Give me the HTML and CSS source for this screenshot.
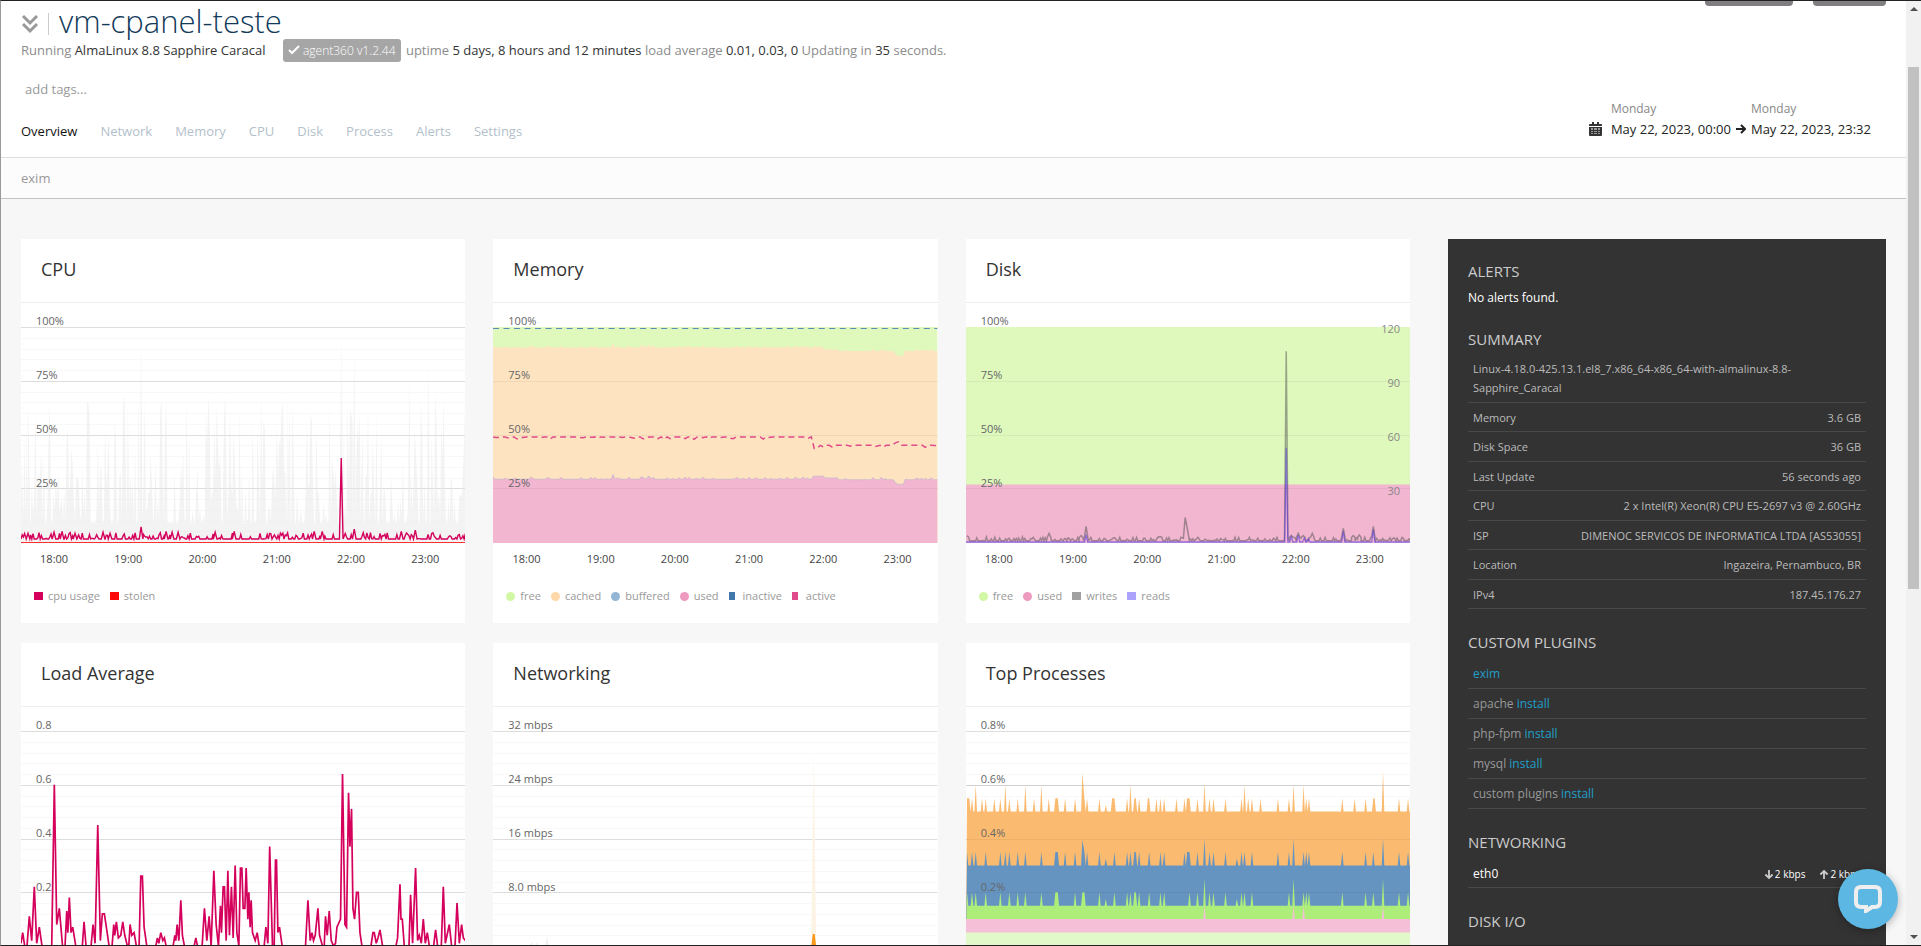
FILE: index.html
```
<!DOCTYPE html>
<html lang="en">

<head>
    <meta charset="utf-8">
    <meta name="viewport" content="width=device-width, initial-scale=1.0">
    <title>vm-cpanel-teste</title>
    <link rel="stylesheet" href="styles.css">
</head>

<body>
    <div class="window">
        <div class="page">
            <header class="top">
                <div class="actions">
                    <button class="action wide" aria-label="Share"></button>
                    <button class="action" aria-label="Menu"></button>
                </div>
                <div class="title">
                    <svg class="chevrons" viewBox="0 0 18 20"><path d="M2 2l7 7 7-7M2 10l7 7 7-7" /></svg>
                    <h1>vm-cpanel-teste</h1>
                </div>
                <p class="status">Running <b>AlmaLinux 8.8 Sapphire Caracal</b>
                    <span class="agent"><svg viewBox="0 0 12 10"><path d="M1 5l3 3 7-7" /></svg> agent360 v1.2.44</span>
                    uptime <b>5 days, 8 hours and 12 minutes</b> load average <b>0.01, 0.03, 0</b> Updating in <b>35</b> seconds.</p>
                <input class="tags" type="text" placeholder="add tags..." aria-label="Tags">
                <div class="bar">
                    <nav class="tabs">
                        <a class="chosen" href="#">Overview</a>
                        <a href="#">Network</a>
                        <a href="#">Memory</a>
                        <a href="#">CPU</a>
                        <a href="#">Disk</a>
                        <a href="#">Process</a>
                        <a href="#">Alerts</a>
                        <a href="#">Settings</a>
                    </nav>
                    <div class="dates">
                        <svg class="calendar" viewBox="0 0 13 14">
                            <path d="M1 2h11q1 0 1 1v1H0V3q0-1 1-1zM0 5h13v8q0 1-1 1H1q-1 0-1-1zM3 0h2v3H3zM8 0h2v3H8z" />
                            <path class="holes" d="M2 6h2v2H2zM5 6h3v2H5zM9 6h2v2H9zM2 9h2v1H2zM5 9h3v1H5zM9 9h2v1H9zM2 11h2v1H2zM5 11h3v1H5zM9 11h2v1H9z" />
                        </svg>
                        <div class="date"><span>Monday</span>May 22, 2023, 00:00</div>
                        <svg class="arrow" viewBox="0 0 10 10"><path d="M0 5h9M5 1l4 4-4 4" /></svg>
                        <div class="date"><span>Monday</span>May 22, 2023, 23:32</div>
                    </div>
                </div>
            </header>
            <nav class="subnav"><a href="#">exim</a></nav>

            <main>
                <section class="cards">
                    <article class="card">
                        <h2>CPU</h2>
                        <div class="chart" id="cpu" data-labels="100%,75%,50%,25%" data-times="18:00,19:00,20:00,21:00,22:00,23:00"></div>
                        <ul class="legend">
                            <li><i class="cpu"></i>cpu usage</li>
                            <li><i class="stolen"></i>stolen</li>
                        </ul>
                    </article>
                    <article class="card">
                        <h2>Memory</h2>
                        <div class="chart" id="memory" data-labels="100%,75%,50%,25%" data-times="18:00,19:00,20:00,21:00,22:00,23:00"></div>
                        <ul class="legend">
                            <li><i class="dot free"></i>free</li>
                            <li><i class="dot cached"></i>cached</li>
                            <li><i class="dot buffered"></i>buffered</li>
                            <li><i class="dot used"></i>used</li>
                            <li><i class="slim inactive"></i>inactive</li>
                            <li><i class="slim active"></i>active</li>
                        </ul>
                    </article>
                    <article class="card">
                        <h2>Disk</h2>
                        <div class="chart" id="disk" data-labels="100%,75%,50%,25%" data-right="120,90,60,30" data-times="18:00,19:00,20:00,21:00,22:00,23:00"></div>
                        <ul class="legend">
                            <li><i class="dot free"></i>free</li>
                            <li><i class="dot used"></i>used</li>
                            <li><i class="writes"></i>writes</li>
                            <li><i class="reads"></i>reads</li>
                        </ul>
                    </article>
                    <article class="card">
                        <h2>Load Average</h2>
                        <div class="chart" id="load" data-labels="0.8,0.6,0.4,0.2"></div>
                    </article>
                    <article class="card">
                        <h2>Networking</h2>
                        <div class="chart" id="network" data-labels="32 mbps,24 mbps,16 mbps,8.0 mbps"></div>
                    </article>
                    <article class="card">
                        <h2>Top Processes</h2>
                        <div class="chart" id="processes" data-labels="0.8%,0.6%,0.4%,0.2%"></div>
                    </article>
                </section>

                <aside>
                    <section>
                        <h3>Alerts</h3>
                        <p>No alerts found.</p>
                    </section>
                    <section>
                        <h3>Summary</h3>
                        <table class="summary">
                            <tr><td colspan="2">Linux-4.18.0-425.13.1.el8_7.x86_64-x86_64-with-almalinux-8.8-Sapphire_Caracal</td></tr>
                            <tr><th>Memory</th><td>3.6 GB</td></tr>
                            <tr><th>Disk Space</th><td>36 GB</td></tr>
                            <tr><th>Last Update</th><td>56 seconds ago</td></tr>
                            <tr><th>CPU</th><td>2 x Intel(R) Xeon(R) CPU E5-2697 v3 @ 2.60GHz</td></tr>
                            <tr><th>ISP</th><td>DIMENOC SERVICOS DE INFORMATICA LTDA [AS53055]</td></tr>
                            <tr><th>Location</th><td>Ingazeira, Pernambuco, BR</td></tr>
                            <tr><th>IPv4</th><td>187.45.176.27</td></tr>
                        </table>
                    </section>
                    <section>
                        <h3>Custom plugins</h3>
                        <ul class="plugins">
                            <li><a href="#">exim</a></li>
                            <li>apache <a href="#">install</a></li>
                            <li>php-fpm <a href="#">install</a></li>
                            <li>mysql <a href="#">install</a></li>
                            <li>custom plugins <a href="#">install</a></li>
                        </ul>
                    </section>
                    <section>
                        <h3>Networking</h3>
                        <div class="device">
                            <b>eth0</b>
                            <span><svg viewBox="0 0 8 10"><path d="M4 0v9M0 5l4 4 4-4" /></svg>2 kbps</span>
                            <span><svg viewBox="0 0 8 10"><path d="M4 10V1M0 5l4-4 4 4" /></svg>2 kbps</span>
                        </div>
                    </section>
                    <section>
                        <h3>Disk I/O</h3>
                    </section>
                </aside>
            </main>
        </div>

        <div class="scrollbar">
            <i class="up"></i>
            <div class="thumb"></div>
            <i class="down"></i>
        </div>
    </div>

    <button class="chat" aria-label="Chat">
        <svg viewBox="0 0 28 28"><path d="M7 2h14q5 0 5 5v10q0 5-5 5h-3l-6 4v-4H7q-5 0-5-5V7q0-5 5-5z" /></svg>
    </button>

    <script src="charts.js"></script>
</body>

</html>
```
FILE: styles.css
```
* {
    box-sizing: border-box;
}

body {
    margin: 0;
    background-color: #f7f7f7;
    font-family: "Open Sans", sans-serif;
    font-size: 13px;
    line-height: 20px;
    color: #333;
}

h1, h2, h3, p, ul {
    margin: 0;
    padding: 0;
    font-weight: 400;
}

ul {
    list-style: none;
}

a {
    text-decoration: none;
}

svg {
    fill: none;
}

.window {
    display: flex;
    height: 100vh;
    overflow: hidden;
    border-top: 1px solid #222;
    border-bottom: 1px solid #222;
    border-left: 1px solid #999;
}

.page {
    flex: 1;
    min-width: 0;
}

/* header */

.top {
    position: relative;
    padding: 0 20px 16px;
    background-color: #fff;
    border-bottom: 1px solid #ddd;
}

.actions {
    position: absolute;
    top: 0;
    right: 20px;
    display: flex;
    gap: 20px;
}

.action {
    width: 73px;
    height: 5px;
    padding: 0;
    border: none;
    border-radius: 0 0 4px 4px;
    background-color: #807e80;
}

.action.wide {
    width: 88px;
}

.title {
    display: flex;
    align-items: center;
    height: 38px;
    padding-top: 8px;
}

.chevrons {
    width: 18px;
    height: 20px;
    margin-right: 9px;
    stroke: #999;
    stroke-width: 3;
}

h1 {
    padding: 0 0 6px 10px;
    border-left: 1px solid #ccc;
    font-size: 31px;
    font-weight: 300;
    line-height: 16px;
    color: #123a5a;
}

.status {
    line-height: 23px;
    color: #8c8c8c;
}

.status b {
    font-weight: 400;
    color: #333;
}

.agent {
    display: inline-block;
    margin: 0 2px 0 14px;
    padding: 0 5px;
    border-radius: 3px;
    background-color: #a6a6a6;
    font-weight: 300;
    font-size: 12px;
    color: #fff;
}

.agent svg {
    width: 12px;
    height: 10px;
    stroke: #fff;
    stroke-width: 2;
}

.tags {
    display: block;
    height: 20px;
    margin-top: 17px;
    padding: 0 4px;
    border: none;
    font: inherit;
}

.tags::placeholder {
    color: #999;
}

.bar {
    display: flex;
    justify-content: space-between;
    align-items: flex-end;
}

.tabs {
    display: flex;
    gap: 23px;
}

.tabs a {
    color: #b3bfca;
}

.tabs .chosen {
    color: #111;
}

.dates {
    display: flex;
    align-items: flex-end;
    margin-right: 15px;
    padding-bottom: 2px;
    line-height: 20px;
    color: #222;
}

.date span {
    display: block;
    font-size: 12px;
    color: #888;
}

.calendar {
    width: 13px;
    height: 14px;
    margin: 0 9px 3px 0;
    fill: #333;
}

.calendar .holes {
    fill: #999;
}

.arrow {
    width: 10px;
    height: 10px;
    margin: 0 5px 5px;
    stroke: #222;
    stroke-width: 2;
}

.subnav {
    padding: 10px 20px;
    background-color: #fcfcfc;
    border-bottom: 1px solid #c4c4c4;
}

.subnav a {
    color: #999;
}

/* cards */

main {
    display: grid;
    grid-template-columns: minmax(0, 1fr) 438px;
    gap: 38px;
    padding: 40px 20px;
}

.cards {
    display: grid;
    grid-template-columns: repeat(3, minmax(0, 1fr));
    gap: 20px 28px;
}

.card {
    height: 384px;
    background-color: #fff;
}

h2 {
    height: 64px;
    padding: 0 20px;
    border-bottom: 1px solid #eee;
    font-size: 18px;
    line-height: 61px;
}

.chart {
    position: relative;
    font-size: 11px;
}

.chart svg {
    display: block;
    width: 100%;
    height: 240px;
}

.chart .y {
    position: absolute;
    top: 8px;
    left: 15px;
    display: grid;
    grid-auto-rows: 54px;
    color: #666;
}

.chart .y.right {
    top: 16px;
    left: auto;
    right: 10px;
    text-align: right;
    color: #888;
}

.chart .x {
    display: grid;
    grid-template-columns: repeat(6, 1fr);
    margin: 6px 3px 0 -4px;
    text-align: center;
    color: #444;
}

.major {
    stroke: #ddd;
}

.minor {
    stroke: #f8f8f8;
}

.over {
    stroke: #000;
    stroke-opacity: 0.05;
}

.legend {
    display: flex;
    gap: 10px;
    margin-top: 17px;
    padding: 0 13px;
    font-size: 11px;
    color: #999;
}

.legend li {
    display: flex;
    align-items: center;
}

.legend i {
    width: 9px;
    height: 8px;
    margin-right: 5px;
}

.legend .dot {
    height: 9px;
    border-radius: 50%;
}

.legend .slim {
    width: 6px;
    margin-right: 8px;
}

.legend .cpu { background-color: #d4005c; }
.legend .stolen { background-color: #ff0a0a; }
.legend .free { background-color: #d2f8a6; }
.legend .cached { background-color: #fed8a8; }
.legend .buffered { background-color: #93b5d6; }
.legend .used { background-color: #ef9bbf; }
.legend .inactive { background-color: #4178ac; }
.legend .active { background-color: #e04a8a; }
.legend .writes { background-color: #a0a0a0; }
.legend .reads { background-color: #aba3fb; }

/* sidebar */

aside {
    padding: 22px 20px;
    background-color: #333;
    color: #ccc;
    font-size: 12px;
}

aside section {
    margin-bottom: 23px;
}

aside p {
    margin: 7px 0 -2px;
    color: #fff;
}

h3 {
    margin-bottom: 5px;
    font-size: 15px;
    text-transform: uppercase;
}

.summary {
    width: 100%;
    border-spacing: 0;
    font-size: 11px;
    line-height: 19px;
    color: #bbb;
}

.summary th,
.summary td {
    height: 29px;
    padding: 0 5px;
    border-bottom: 1px solid #484848;
    font-weight: 400;
    text-align: left;
}

.summary th + td {
    text-align: right;
}

.summary tr:nth-child(odd) td {
    height: 30px;
}

.summary td[colspan] {
    padding: 5px;
}

.plugins li {
    height: 30px;
    padding: 5px 5px 0;
    border-bottom: 1px solid #484848;
    color: #999;
}

.plugins li:first-child {
    height: 32px;
    padding-top: 7px;
}

.plugins a {
    color: #1f9fc9;
}

.device {
    display: flex;
    gap: 15px;
    padding: 7px 5px 3px;
    border-bottom: 1px solid #484848;
    color: #fff;
}

.device b {
    flex: 1;
    font-weight: 400;
}

.device span {
    font-size: 10px;
}

.device svg {
    width: 8px;
    height: 9px;
    margin-right: 2px;
    stroke: #ccc;
    stroke-width: 2;
    overflow: visible;
    vertical-align: -1px;
}

/* scrollbar and chat */

.scrollbar {
    display: flex;
    flex-direction: column;
    align-items: center;
    width: 15px;
    padding: 6px 0;
    background-color: #f1f1f1;
}

.scrollbar .thumb {
    width: 11px;
    height: 56%;
    margin-top: 56px;
    margin-bottom: auto;
    background-color: #c1c1c1;
}

.up,
.down {
    border: 4px solid transparent;
}

.up {
    border-top: none;
    border-bottom-color: #505050;
}

.down {
    border-bottom: none;
    border-top-color: #505050;
}

.chat {
    position: fixed;
    right: 23px;
    bottom: 17px;
    width: 60px;
    height: 60px;
    padding: 15px 16px;
    border: none;
    border-radius: 50%;
    background-color: #5cb7e3;
    box-shadow: 0 2px 8px rgba(0, 0, 0, 0.3);
}

.chat svg {
    display: block;
    width: 28px;
    height: 28px;
    stroke: #eee;
    stroke-width: 4;
}
```
FILE: charts.js
```
// plot area is 444 x 240, value 0 sits on y 239 and the top grid line on y 24
const W = 444;
const BASE = 239;
const SPAN = 215;

let seed = 7;

function random() {
    seed = (seed * 16807) % 2147483647;
    return seed / 2147483647;
}

function toPoints(data, max) {
    return data.map(d => d[0].toFixed(1) + "," + (BASE - d[1] / max * SPAN).toFixed(1)).join(" ");
}

function line(data, max, attrs) {
    return `<polyline points="${toPoints(data, max)}" ${attrs}/>`;
}

function area(data, max, color) {
    return `<polygon points="0,${BASE + 1} ${toPoints(data, max)} ${W},${BASE + 1}" fill="${color}"/>`;
}

// low noise with now and then a small bump
function noise(low, bump, chance) {
    const data = [];
    for (let x = 0; x <= W; x += 1.2) {
        data.push([x, low + (random() < chance ? random() * bump : 0)]);
    }
    data.push([W, low]);
    return data;
}

// put [x, top] spikes on a series
function spikes(data, list, half) {
    const tips = list.map(s => [s[0], s[1]]);
    const kept = data.filter(d => !list.some(s => Math.abs(s[0] - d[0]) < half));
    const feet = [];
    list.forEach(s => {
        const low = data[0][1];
        [s[0] - half, s[0] + half].forEach(x => {
            if (x > 0 && x < W && !list.some(o => Math.abs(o[0] - x) < half - 0.1)) feet.push([x, low]);
        });
    });
    return kept.concat(tips, feet).sort((a, b) => a[0] - b[0]);
}

function gridLines() {
    let html = "";
    for (let i = 1; i <= 20; i++) {
        const y = Math.round(BASE - SPAN * i / 20) + 0.5;
        html += `<path class="${i % 5 ? "minor" : "major"}" d="M0 ${y}H${W}"/>`;
    }
    return html;
}

function gridOver() {
    return [1, 2, 3].map(i => `<path class="over" d="M0 ${Math.round(BASE - SPAN * i / 4) + 0.5}H${W}"/>`).join("");
}

function draw(id, shapes) {
    const chart = document.getElementById(id);
    const labels = list => list.split(",").map(t => `<span>${t}</span>`).join("");
    let html = `<svg viewBox="0 0 444 240" preserveAspectRatio="none">${gridLines()}${shapes}</svg>`;
    html += `<div class="y">${labels(chart.dataset.labels)}</div>`;
    if (chart.dataset.right) {
        html += `<div class="y right">${labels(chart.dataset.right)}</div>`;
    }
    if (chart.dataset.times) {
        html += `<div class="x">${labels(chart.dataset.times)}</div>`;
    }
    chart.innerHTML = html;
}

// CPU
const peaks = [];
for (let x = 0; x <= W; x += 1.2) {
    const r = random();
    peaks.push([x, r < 0.35 ? 9 : r < 0.7 ? 10 + random() * 25 : 25 + random() * 45]);
}
const cpuMax = spikes(peaks, [[7.5, 65], [120, 94], [268, 64], [320, 97], [333, 91], [341, 52], [388, 76], [407, 83]], 1.5);
const cpu = spikes(noise(1.4, 3, 0.45),
    [[7, 4], [33, 4.5], [41, 5], [54, 4], [82, 4.5], [89, 4], [120, 7], [145, 5], [151, 4.5], [157, 4.5], [194, 4.5], [213, 5], [293, 5], [301, 5], [320, 39], [333, 6], [380, 5], [394, 5.5]], 1.8);
draw("cpu", area(cpuMax, 100, "#e8e8e8\" fill-opacity=\"0.5") +
    line(cpu, 100, 'stroke="#d4005c" stroke-width="1.4"') +
    '<path d="M0 239.5H444" stroke="#ff3030"/>');

// Memory
function memoryTop(early, late, dip) {
    const data = [];
    for (let x = 0; x <= W; x += 2) {
        let v = x < 330 ? early : x < 345 ? (early + late) / 2 : late;
        if (x > 401 && x < 411) v = dip;
        if (x === 120 || x === 156) v += 1.5;
        data.push([x, v + (random() < 0.3 ? random() * 1.1 : 0)]);
    }
    return data;
}
const cached = memoryTop(90.4, 88.8, 86.6);
const used = cached.map(d => [d[0], d[0] < 320 ? d[1] - 61.2 : d[0] < 330 ? 30.6 : d[1] - 59.8]);
const active = [];
for (let x = 0; x <= W; x += 3) {
    active.push([x, (x < 320 ? 48.9 : x < 326 ? 43.5 : x > 400 && x < 408 ? 46.8 : 45) - (random() < 0.35 ? random() * 1.2 : 0)]);
}
draw("memory", area([[0, 100], [W, 100]], 100, "#dff9bd") +
    area(cached, 100, "#fee3c1") + area(used, 100, "#f2b6d0") +
    line(used, 100, 'stroke="#b9b4d2" stroke-width="0.6"') + gridOver() +
    '<path d="M0 25.5H444" stroke="#5a8cb8" stroke-dasharray="6 4.5"/>' +
    line(active, 100, 'stroke="#e04a8a" stroke-width="1.5" stroke-dasharray="6 4"'));

// Disk
const writes = spikes(noise(0.6, 1.8, 0.45),
    [[1, 3], [83, 4], [115, 3], [120, 7.3], [194, 2.5], [219, 11.4], [221, 6.5], [320, 88.7], [325, 3], [332, 4], [337, 3], [346, 4], [377, 6.3], [387, 3], [393, 3.2], [407, 7.3]], 1.7);
const reads = spikes([[0, 0], [W, 0]], [[120, 3.4], [320, 43.8], [325, 2.5], [332, 3.2], [338, 1.8], [342, 1.5], [377, 5], [407, 5.8]], 1.6);
draw("disk", area([[0, 100], [W, 100]], 100, "#dff9bd") + area([[0, 26.7], [W, 26.7]], 100, "#f2b6d0") + gridOver() +
    line(writes, 100, 'stroke="#505050" stroke-opacity="0.5" stroke-width="1.5"') +
    line(reads, 100, 'stroke="#5a3ce0" stroke-opacity="0.6" stroke-width="1.3"'));

// Load average, [x, hundredths]
const load = [
    [0, 1], [1.7, 5], [3.7, 0], [6, 0], [8.3, 11], [10.7, 2], [13.3, 22], [15.7, 1], [18.3, 7], [21, 0],
    [30.7, 0], [33.3, 60], [35.7, 8], [38.3, 14], [41.5, 0], [44, 0], [45.7, 13], [46.8, 5], [48.3, 18], [50, 5], [51.7, 7], [54.7, 0],
    [61.3, 0], [63, 9], [65, 0], [70, 0], [72, 8], [74, 1], [76.7, 45], [79.3, 2], [81.3, 12], [83.3, 12], [85.7, 6], [88, 0],
    [91, 0], [92.7, 8], [93.7, 4], [95.3, 9], [97.3, 3], [99.7, 4], [101.7, 9], [103.7, 4], [106.3, 0], [107.7, 0], [109, 8], [110.7, 4], [113, 5], [115.3, 0],
    [118, 0], [119.7, 26], [121.3, 26], [123, 7], [125.7, 0], [134.7, 0], [136.3, 3], [137.7, 1], [139.7, 5], [141.7, 2], [143.3, 3], [145, 0],
    [152, 0], [153.7, 4], [154.7, 2], [156, 8], [157.7, 2], [159.7, 17], [161.3, 4], [163.3, 0], [173, 0], [174.7, 3], [176.3, 0],
    [181, 0], [183.3, 14], [185.7, 2], [188, 11], [190, 0], [192.7, 28], [195, 8], [197.3, 0], [199.3, 15], [200.3, 5], [202, 22], [203.3, 22], [205, 2],
    [206.7, 28], [208.3, 4], [210.3, 22], [212, 3], [214, 30], [215.7, 5], [217.7, 0], [219.3, 29], [220.7, 29], [222, 14], [223.7, 14], [225, 29],
    [226.7, 10], [227.7, 20], [229, 7], [230, 17], [231.3, 5], [234, 2], [236, 5], [238, 0], [243, 0], [244.7, 7], [246.7, 1], [248.5, 37], [251.3, 0],
    [253, 0], [254.3, 32], [255.3, 32], [256.7, 5], [258.3, 7], [261, 0], [284.3, 0], [286.7, 17], [289, 2], [290.7, 5], [292.3, 2], [294, 4], [296.7, 14],
    [298.3, 4], [301.3, 0], [303, 0], [304.3, 11], [306, 4], [308, 13], [310, 2], [312.3, 0], [314.3, 1], [315.7, 7], [319.3, 10], [321.3, 64], [323.7, 8],
    [325.3, 7], [327.3, 57], [328.7, 37], [330.3, 51], [331.7, 14], [333.3, 10], [335.3, 20], [337, 20], [338.7, 5], [340.7, 0],
    [349.7, 0], [351.7, 5], [353, 5], [355, 1], [356.7, 3], [358.7, 6], [361.3, 0], [374.7, 0], [376.3, 3], [378.7, 23], [379.7, 10], [381, 10], [383, 0],
    [387.7, 0], [389.3, 19], [391.3, 1], [394.3, 29], [396.3, 2], [398, 4], [400, 1], [402, 10], [404, 1], [406, 5], [408, 0], [412.3, 0], [414.3, 6], [416.3, 0],
    [420, 0], [422, 22], [424, 1], [428, 8], [430.3, 0], [433.7, 0], [435.7, 16], [438, 1], [440.3, 8], [442, 3], [444, 2]
];
draw("load", line(load, 80, 'stroke="#d4005c" stroke-width="1.7"'));

// Networking
draw("network", '<path d="M318 239L320.5 45L323 239z" fill="#fdf3e4"/>' +
    '<path d="M52 239L54 230L56 239zM36 239L39 235L41 239L44 235L45 239z" fill="#f3eef0"/>' +
    '<path d="M318 240L319.5 227H321.5L323 240z" fill="#f79a1c"/>');

// Top processes, spikes stand at x / 3
const flat = top => [[0, top], [W, top]];
const third = (list, top, special) => list.map(x => [x / 3, special[x] || top]);
const greenX = [3, 18, 29, 59, 103, 130, 155, 178, 226, 268, 275, 327, 349, 355, 400, 419, 445, 483, 493, 505, 509, 519, 549, 583, 594, 670, 694, 715, 730, 742, 778, 812, 826, 835, 857, 968, 982, 1012, 1020, 1028, 1128, 1198, 1221, 1250, 1298, 1325];
const blueX = greenX.concat([118, 297, 363, 655, 663, 935]).sort((a, b) => a - b);
const orangeX = blueX.concat([10, 48, 85, 204, 248, 438, 545, 571, 631, 846, 883, 1165, 1225]).sort((a, b) => a - b);
draw("processes",
    area(spikes(flat(50), third(orangeX, 55, { 29: 60, 118: 60, 178: 60, 226: 60, 349: 64.5, 419: 52.5, 493: 60, 715: 60.5, 812: 50, 835: 60, 982: 60, 1012: 60, 1250: 65 }), 1.3), 80, "#fabb70") +
    area(spikes(flat(30), third(blueX, 35, { 349: 39.5, 419: 32.5, 715: 40, 812: 32.5, 982: 40, 1250: 40 }), 1.3), 80, "#6694c1") +
    area(spikes(flat(15), third(greenX, 20, { 419: 17.5, 715: 25, 812: 17.5, 982: 25, 1250: 25 }), 1.3), 80, "#adee7a") +
    area(spikes(flat(10), third([715, 982, 1012, 1250], 15, {}), 1.3), 80, "#f5bfd8") +
    area(flat(5), 80, "#e1f9c8") + gridOver());
```
